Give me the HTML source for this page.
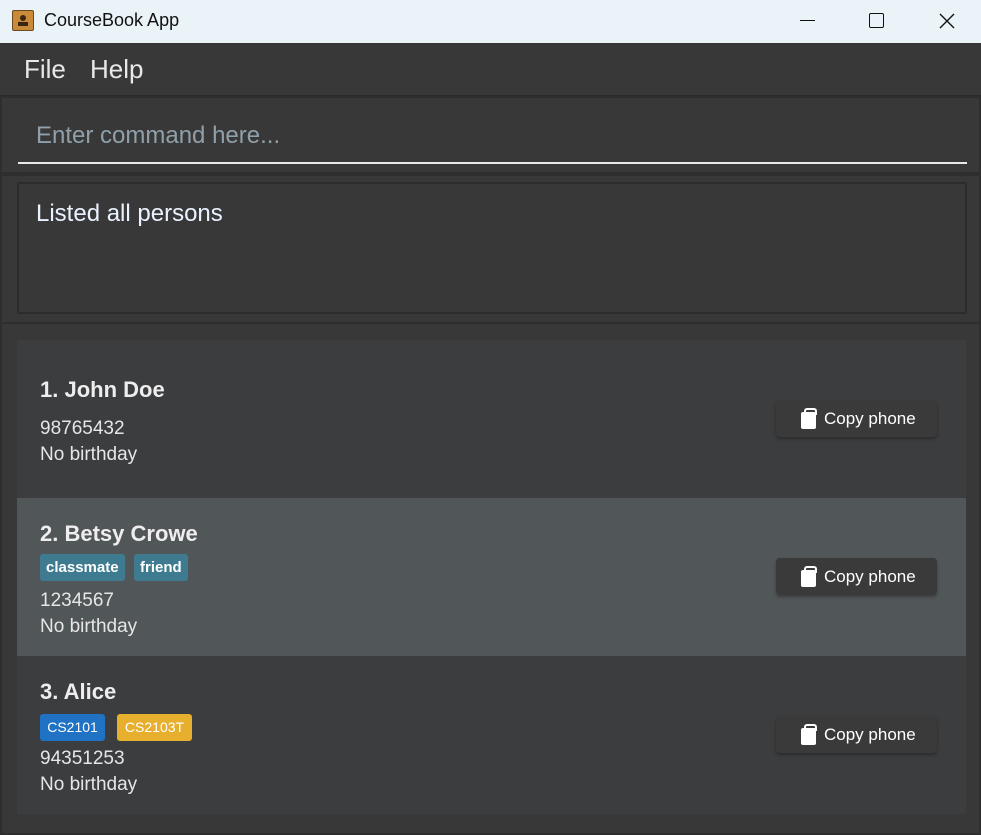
<!DOCTYPE html>
<html><head><meta charset="utf-8"><style>
*{margin:0;padding:0;box-sizing:border-box}
body{width:981px;height:835px;overflow:hidden;background:#383838;font-family:"Segoe UI","Liberation Sans",sans-serif;position:relative}
.abs{position:absolute}
.title{left:0;top:0;width:981px;height:43px;background:#eaf4f8;}
.title span{position:absolute;left:44px;top:10px;font-size:18px;color:#111}
.menu{top:43px;left:0;width:981px;height:53px;background:#383838;border-bottom:1px solid #2a2a2a}
.menu span{position:absolute;top:11px;font-size:26px;color:#e8e8e8;font-weight:300}
.pane{left:0;width:981px;background:#383838;border:2px solid #2e2e2e}
.card{left:17px;width:949px;height:158px}
.name{position:absolute;left:23px;font-size:22px;font-weight:bold;color:#eee}
.t{position:absolute;left:23px;font-size:19px;color:#e6e6e6}
.tag{position:absolute;height:27px;line-height:27px;padding:0 6px;font-size:15px;border-radius:3px;color:#fff}
.btn{position:absolute;left:759px;width:161px;height:37px;background:#3a3a3a;border-radius:4px;box-shadow:0 2px 3px rgba(0,0,0,.3);color:#fff;font-size:17px}
.btn span{position:absolute;left:48px;top:9px}
.btn i{position:absolute;left:25px;top:12px;width:15px;height:17px;background:#fff;border-radius:2px}
.btn i:before{content:"";position:absolute;left:3px;top:-4px;width:9px;height:5px;border:2px solid #fff;border-bottom:none;border-radius:3px 3px 0 0}
</style></head><body>
<div class="abs title">
 <div class="abs" style="left:12px;top:10px;width:22px;height:21px;background:#c98a3a;border:1px solid #6b4a20;border-radius:2px"><div style="position:absolute;left:7px;top:4px;width:6px;height:6px;border-radius:50%;background:#3a2510"></div><div style="position:absolute;left:5px;top:11px;width:10px;height:4px;background:#3a2510"></div></div>
 <span>CourseBook App</span>
 <div class="abs" style="left:800px;top:20px;width:15px;height:1px;background:#111"></div>
 <div class="abs" style="left:869px;top:13px;width:15px;height:15px;border:1.5px solid #111;border-radius:2px"></div>
 <svg class="abs" style="left:939px;top:13px" width="16" height="16"><path d="M1 1L15 15M15 1L1 15" stroke="#111" stroke-width="1.4"/></svg>
</div>
<div class="abs menu"><span style="left:24px">File</span><span style="left:90px">Help</span></div>
<div class="abs pane" style="top:96px;height:78px">
 <div class="abs" style="left:34px;top:24px;font-size:24px;color:#8fa0aa;font-weight:300">Enter command here...</div>
 <div class="abs" style="left:16px;top:64px;width:949px;height:2px;background:#e8e8e8"></div>
</div>
<div class="abs pane" style="top:174px;height:150px">
 <div class="abs" style="left:15px;top:6px;width:950px;height:132px;border:2px solid #2c2c2c"></div>
 <div class="abs" style="left:34px;top:24px;font-size:24px;color:#eaf2ff;font-weight:300">Listed all persons</div>
</div>
<div class="abs pane" style="top:322px;height:513px"></div>
<div class="abs card" style="top:340px;background:#3c3d3f">
 <div class="name" style="top:37px">1. John Doe</div>
 <div class="t" style="top:78px">98765432</div>
 <div class="t" style="top:104px">No birthday</div>
 <div class="btn" style="top:60px"><i></i><span>Copy phone</span></div>
</div>
<div class="abs card" style="top:498px;background:#515658">
 <div class="name" style="top:23px">2. Betsy Crowe</div>
 <div class="tag" style="left:23px;top:56px;background:#3e7b91;font-weight:bold">classmate</div>
 <div class="tag" style="left:117px;top:56px;background:#3e7b91;font-weight:bold">friend</div>
 <div class="t" style="top:92px">1234567</div>
 <div class="t" style="top:118px">No birthday</div>
 <div class="btn" style="top:60px"><i></i><span>Copy phone</span></div>
</div>
<div class="abs card" style="top:656px;background:#3c3d3f">
 <div class="name" style="top:23px">3. Alice</div>
 <div class="tag" style="left:23px;top:58px;width:65px;text-align:center;background:#1f72c4;padding:0;font-size:14px">CS2101</div>
 <div class="tag" style="left:100px;top:58px;width:75px;text-align:center;background:#e6b02e;padding:0;font-size:14px">CS2103T</div>
 <div class="t" style="top:92px">94351253</div>
 <div class="t" style="top:118px">No birthday</div>
 <div class="btn" style="top:60px"><i></i><span>Copy phone</span></div>
</div>
</body></html>
